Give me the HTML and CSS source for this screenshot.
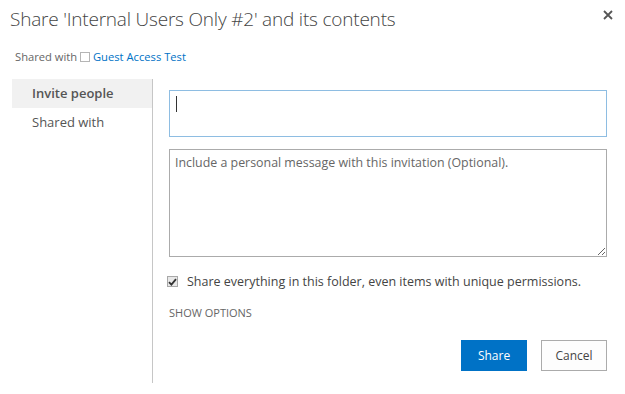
FILE: index.html
```html
<!DOCTYPE html>
<html lang="en">
<head>
    <meta charset="UTF-8">
    <title>Share</title>
    <link rel="stylesheet" href="styles.css">
</head>
<body>
    <div class="dialog">
        <div class="dialog-header">
            <h1>Share 'Internal Users Only #2' and its contents</h1>
            <svg class="close" width="10" height="10" viewBox="0 0 10 10">
                <path d="M1 1 L9 9 M9 1 L1 9" stroke="#555" stroke-width="1.8"/>
            </svg>
        </div>
        <div class="shared-line">
            Shared with <span class="box"></span> <a href="#">Guest Access Test</a>
        </div>
        <div class="dialog-body">
            <!-- menu lateral -->
            <div class="nav">
                <div class="nav-item active">Invite people</div>
                <div class="nav-item">Shared with</div>
            </div>
            <div class="content">
                <div class="people-input"><span class="caret"></span></div>
                <textarea class="message" placeholder="Include a personal message with this invitation (Optional)."></textarea>
                <div class="check-row">
                    <span class="check">
                        <svg width="9" height="8" viewBox="0 0 9 8">
                            <path d="M1 4.2 L3.4 6.6 L8 1.2" stroke="#333" stroke-width="1.8" fill="none"/>
                        </svg>
                    </span>
                    <span>Share everything in this folder, even items with unique permissions.</span>
                </div>
                <div class="show-options">SHOW OPTIONS</div>
                <div class="buttons">
                    <button class="btn primary">Share</button>
                    <button class="btn">Cancel</button>
                </div>
            </div>
        </div>
    </div>
</body>
</html>
```

FILE: styles.css
```css
body {
    margin: 0;
    background-color: #ffffff;
    font-family: 'Open Sans', 'Noto Sans', sans-serif;
    color: #444444;
}
.dialog {
    width: 625px;
    height: 394px;
}
.dialog-header {
    display: flex;
    justify-content: space-between;
    padding: 6px 12px 0 10px;
    height: 34px;
}
h1 {
    margin: 0;
    font-weight: 300;
    font-size: 19px;
    color: #444444;
    letter-spacing: -0.2px;
}
.close {
    margin-top: 4px;
}
.shared-line {
    padding-left: 15px;
    font-size: 11.2px;
    color: #666666;
    height: 39px;
    line-height: 34px;
}
.shared-line .box {
    display: inline-block;
    width: 8px;
    height: 8px;
    border: 1px solid #b5b5b5;
    vertical-align: -1px;
}
.shared-line a {
    color: #0072c6;
    text-decoration: none;
}
.dialog-body {
    display: flex;
    margin-left: 12px;
}
.nav {
    width: 140px;
    height: 304px;
    border-right: 1px solid #c6c6c6;
}
.nav-item {
    font-size: 13px;
    padding-left: 20px;
    height: 29px;
    line-height: 29px;
    color: #555555;
}
.nav-item.active {
    background-color: #f1f1f1;
    font-weight: 600;
}
.content {
    padding-left: 16px;
    padding-top: 11px;
    width: 438px;
}
.people-input {
    height: 47px;
    border: 1px solid #8ebde2;
    padding: 5px 6px;
    box-sizing: border-box;
}
.caret {
    display: block;
    width: 1px;
    height: 16px;
    background-color: #333;
}
.message {
    display: block;
    margin-top: 12px;
    width: 438px;
    height: 108px;
    box-sizing: border-box;
    border: 1px solid #ababab;
    padding: 4px 5px;
    font-family: 'Open Sans', 'Noto Sans', sans-serif;
    font-size: 12.4px;
    resize: vertical;
    outline: none;
}
.message::placeholder {
    color: #666666;
}
.check-row {
    display: flex;
    align-items: center;
    margin-top: 16px;
    margin-left: -2px;
    font-size: 12.5px;
    color: #444444;
}
.check {
    width: 9px;
    height: 9px;
    border: 1px solid #a8a8a8;
    background-color: #e8e8e8;
    margin-right: 9px;
    display: flex;
    align-items: center;
    justify-content: center;
}
.show-options {
    margin-top: 15px;
    font-size: 11px;
    color: #666666;
}
.buttons {
    display: flex;
    justify-content: flex-end;
    margin-top: 20px;
}
.btn {
    width: 66px;
    height: 31px;
    border: 1px solid #ababab;
    background-color: #fdfdfd;
    color: #444444;
    font-family: 'Open Sans', 'Noto Sans', sans-serif;
    font-size: 12px;
    margin-left: 14px;
}
.btn.primary {
    background-color: #0072c6;
    border-color: #0072c6;
    color: #ffffff;
}
```
